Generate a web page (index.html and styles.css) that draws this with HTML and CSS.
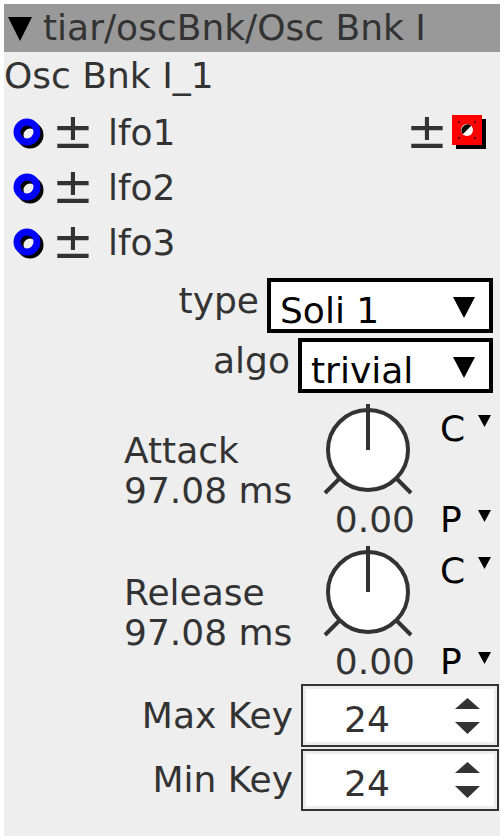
FILE: index.html
```html
<!DOCTYPE html>
<html lang="en">
<head>
<meta charset="UTF-8">
<title>Osc Bnk I</title>
<link rel="stylesheet" href="styles.css">
</head>
<body>
<div class="object">
    <!-- Title bar -->
    <div class="object-title">
        <svg class="caret" width="24" height="24" viewBox="0 0 24 24"><polygon points="0,0 24,0 12,24" fill="#000"/></svg>
        <span>tiar/oscBnk/Osc Bnk I</span>
    </div>
    <div class="instance">Osc Bnk I_1</div>

    <!-- Inlets / outlets -->
    <div class="io-list">
        <div class="io-row">
            <svg class="inlet" width="31" height="31" viewBox="0 0 31 31"><circle cx="17" cy="17" r="10" fill="none" stroke="#000" stroke-width="7"/><circle cx="14" cy="14" r="10" fill="none" stroke="#00f" stroke-width="7"/></svg>
            <span class="pm">±</span>
            <span class="io-name">lfo1</span>
            <span class="spacer"></span>
            <span class="pm pm-out">±</span>
            <svg class="outlet" width="35" height="35" viewBox="0 0 35 35"><rect x="4" y="4" width="30" height="30" fill="#000"/><rect x="0" y="0" width="30" height="30" fill="#f00"/><circle cx="15" cy="15" r="6" fill="#fff"/><path d="M10.8 19.2 A6 6 0 0 1 19.2 10.8 Z" fill="#000"/><rect x="6" y="6" width="2" height="2" fill="#600"/><rect x="22" y="6" width="2" height="2" fill="#600"/><rect x="6" y="22" width="2" height="2" fill="#600"/><rect x="22" y="22" width="2" height="2" fill="#600"/></svg>
        </div>
        <div class="io-row">
            <svg class="inlet" width="31" height="31" viewBox="0 0 31 31"><circle cx="17" cy="17" r="10" fill="none" stroke="#000" stroke-width="7"/><circle cx="14" cy="14" r="10" fill="none" stroke="#00f" stroke-width="7"/></svg>
            <span class="pm">±</span>
            <span class="io-name">lfo2</span>
        </div>
        <div class="io-row">
            <svg class="inlet" width="31" height="31" viewBox="0 0 31 31"><circle cx="17" cy="17" r="10" fill="none" stroke="#000" stroke-width="7"/><circle cx="14" cy="14" r="10" fill="none" stroke="#00f" stroke-width="7"/></svg>
            <span class="pm">±</span>
            <span class="io-name">lfo3</span>
        </div>
    </div>

    <!-- Attributes -->
    <div class="select-row type-row">
        <span class="select-label">type</span>
        <div class="select select-type">
            <span>Soli 1</span>
            <svg class="select-arrow" width="22" height="21" viewBox="0 0 22 21"><polygon points="0,0 22,0 11,21" fill="#000"/></svg>
        </div>
    </div>
    <div class="select-row algo-row">
        <span class="select-label">algo</span>
        <div class="select select-algo">
            <span>trivial</span>
            <svg class="select-arrow" width="22" height="21" viewBox="0 0 22 21"><polygon points="0,0 22,0 11,21" fill="#000"/></svg>
        </div>
    </div>

    <!-- Dials -->
    <div class="knob-row first-knob">
        <div class="knob-label">Attack<br>97.08 ms</div>
        <div class="knob">
            <svg width="96" height="96" viewBox="0 0 96 96"><circle cx="48" cy="50" r="40" fill="#fff" stroke="#333" stroke-width="4"/><line x1="48" y1="4" x2="48" y2="50" stroke="#333" stroke-width="4"/><line x1="5" y1="93" x2="20" y2="78" stroke="#333" stroke-width="4"/><line x1="76" y1="78" x2="91" y2="93" stroke="#333" stroke-width="4"/></svg>
            <div class="knob-value">0.00</div>
        </div>
        <div class="knob-menu">
            <div class="menu-item"><span class="menu-letter">C</span><svg class="menu-arrow" width="13" height="12" viewBox="0 0 13 12"><polygon points="0,0 13,0 6.5,12" fill="#000"/></svg></div>
            <div class="menu-item"><span class="menu-letter">P</span><svg class="menu-arrow arrow-low" width="13" height="12" viewBox="0 0 13 12"><polygon points="0,0 13,0 6.5,12" fill="#000"/></svg></div>
        </div>
    </div>
    <div class="knob-row">
        <div class="knob-label">Release<br>97.08 ms</div>
        <div class="knob">
            <svg width="96" height="96" viewBox="0 0 96 96"><circle cx="48" cy="50" r="40" fill="#fff" stroke="#333" stroke-width="4"/><line x1="48" y1="4" x2="48" y2="50" stroke="#333" stroke-width="4"/><line x1="5" y1="93" x2="20" y2="78" stroke="#333" stroke-width="4"/><line x1="76" y1="78" x2="91" y2="93" stroke="#333" stroke-width="4"/></svg>
            <div class="knob-value">0.00</div>
        </div>
        <div class="knob-menu">
            <div class="menu-item"><span class="menu-letter">C</span><svg class="menu-arrow" width="13" height="12" viewBox="0 0 13 12"><polygon points="0,0 13,0 6.5,12" fill="#000"/></svg></div>
            <div class="menu-item"><span class="menu-letter">P</span><svg class="menu-arrow arrow-low" width="13" height="12" viewBox="0 0 13 12"><polygon points="0,0 13,0 6.5,12" fill="#000"/></svg></div>
        </div>
    </div>

    <!-- Spinners -->
    <div class="num-row">
        <span class="num-label">Max Key</span>
        <div class="num-box">
            <span class="num-value">24</span>
            <svg class="spin" width="25" height="36" viewBox="0 0 25 36"><polygon points="12.5,0 25,11 0,11" fill="#333"/><polygon points="0,24 25,24 12.5,36" fill="#333"/></svg>
        </div>
    </div>
    <div class="num-row min-row">
        <span class="num-label">Min Key</span>
        <div class="num-box">
            <span class="num-value">24</span>
            <svg class="spin" width="25" height="36" viewBox="0 0 25 36"><polygon points="12.5,0 25,11 0,11" fill="#333"/><polygon points="0,24 25,24 12.5,36" fill="#333"/></svg>
        </div>
    </div>
</div>
</body>
</html>
```

FILE: styles.css
```css
/* Page */
body {
    margin: 4px;
    font-family: "DejaVu Sans", sans-serif;
    font-size: 36px;
    color: #333;
    background-color: #fff;
}

.object {
    width: 496px;
    height: 832px;
    background-color: #eee;
    overflow: hidden;
}

/* Title */
.object-title {
    display: flex;
    align-items: center;
    height: 48px;
    line-height: 48px;
    background-color: #999;
    padding-left: 4px;
    white-space: nowrap;
}

.caret {
    margin-right: 11px;
    margin-top: 1px;
}

.instance {
    height: 48px;
    line-height: 48px;
    white-space: nowrap;
}

/* Inlets and outlets */
.io-list {
    padding-top: 5px;
}

.io-row {
    display: flex;
    align-items: center;
    height: 55px;
    line-height: 55px;
    padding-left: 9px;
    padding-right: 13px;
}

.inlet {
    flex: none;
    margin-top: 1px;
}

.pm {
    font-size: 50px;
    line-height: 55px;
    margin-left: 8px;
    margin-top: -2px;
}

.io-name {
    margin-left: 14px;
}

.spacer {
    flex: 1;
}

.pm-out {
    margin-right: 4px;
}

.outlet {
    flex: none;
}

/* Drop-downs */
.select-row {
    display: flex;
    justify-content: flex-end;
    align-items: flex-start;
    padding-right: 7px;
}

.type-row {
    margin-top: 8px;
}

.algo-row {
    margin-top: 5px;
}

.select-label {
    line-height: 42px;
    margin-top: 2px;
    margin-right: 8px;
}

.select {
    box-sizing: border-box;
    display: flex;
    justify-content: space-between;
    align-items: flex-start;
    height: 55px;
    border: 4px solid #000;
    background-color: #fff;
    color: #000;
    padding: 10px 14px 0 9px;
    line-height: 37px;
    overflow: hidden;
}

.select-type {
    width: 226px;
}

.select-algo {
    width: 195px;
}

.select-arrow {
    margin-top: 5px;
}

/* Dials */
.knob-row {
    display: flex;
    height: 142px;
}

.first-knob {
    margin-top: 7px;
}

.knob-label {
    box-sizing: border-box;
    width: 316px;
    padding-left: 120px;
    padding-top: 31px;
    line-height: 40px;
    white-space: nowrap;
}

.knob {
    width: 96px;
}

.knob svg {
    display: block;
}

.knob-value {
    margin-top: 4px;
    line-height: 40px;
    text-align: right;
    padding-right: 1px;
}

.knob-menu {
    box-sizing: border-box;
    height: 140px;
    margin-left: 24px;
    padding-top: 9px;
    display: flex;
    flex-direction: column;
    justify-content: space-between;
    color: #000;
}

.menu-item {
    display: flex;
    align-items: flex-start;
    line-height: 40px;
}

.menu-letter {
    width: 38px;
}

.menu-arrow {
    margin-top: 6px;
}

.arrow-low {
    margin-top: 10px;
}

/* Number spinners */
.num-row {
    display: flex;
    justify-content: flex-end;
    align-items: center;
    padding-right: 1px;
}

.min-row {
    margin-top: 2px;
}

.num-label {
    line-height: 42px;
    margin-right: 8px;
}

.num-box {
    box-sizing: border-box;
    display: flex;
    align-items: center;
    justify-content: space-between;
    width: 198px;
    height: 63px;
    border: 2px solid #333;
    background-color: #fff;
    box-shadow: inset 0 0 0 3px #ececec;
    padding-left: 41px;
    padding-right: 17px;
}

.min-row .num-box {
    height: 62px;
}

.num-value {
    line-height: 42px;
    padding-top: 8px;
}
```
